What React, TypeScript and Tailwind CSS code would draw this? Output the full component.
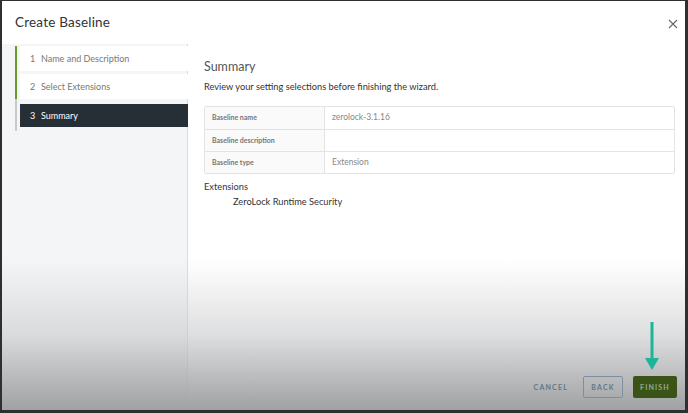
import React from "react";

export default function App() {
  const rows = [
    ["Baseline name", "zerolock-3.1.16"],
    ["Baseline description", ""],
    ["Baseline type", "Extension"],
  ];
  return (
    <div className="w-[688px] h-[413px] bg-[#2e2f31] pl-[2px] pt-[1px] pr-[3px] pb-[3px] overflow-hidden" style={{ fontFamily: "Lato, 'Open Sans', sans-serif" }}>
      <div className="relative w-full h-full bg-white flex flex-col overflow-hidden">
        <div className="h-[43px] flex items-center justify-between pl-[13px] pr-[7px] shrink-0">
          <div className="text-[13.5px] text-[#333] tracking-[0.2px]">Create Baseline</div>
          <svg width="10" height="10" viewBox="0 0 10 10" className="mt-[2px]">
            <path d="M1 1 L9 9 M9 1 L1 9" stroke="#666" strokeWidth="1.1" />
          </svg>
        </div>
        <div className="flex flex-1 min-h-0">
          <div className="w-[186px] bg-[#f4f5f7] border-r border-[#dcdcdc] pl-[13px] pt-[2px] shrink-0">
            <div className="flex flex-col border-l-2 border-[#c9c9c9] w-[173px]">
              <div className="border-l-2 border-[#6b9a2c] -ml-[2px] pl-[3px] flex flex-col gap-[3px]">
                <div className="h-[25px] bg-white flex items-center pl-[10px] text-[9px] text-[#777]">
                  <span className="w-[11px]">1</span>Name and Description
                </div>
                <div className="h-[25px] bg-white flex items-center pl-[10px] text-[9px] text-[#777]">
                  <span className="w-[11px]">2</span>Select Extensions
                </div>
              </div>
              <div className="h-[5px]" />
              <div className="h-[23px] bg-[#262e36] ml-[3px] flex items-center pl-[10px] text-[9px] text-white">
                <span className="w-[11px]">3</span>Summary
              </div>
              <div className="h-[4px]" />
            </div>
          </div>
          <div className="flex-1 pl-[16px] pr-[10px] pt-[14px]">
            <div className="text-[12.5px] text-[#555]">Summary</div>
            <div className="text-[9.25px] text-[#333] mt-[3px]">Review your setting selections before finishing the wizard.</div>
            <div className="mt-[12px] border border-[#e3e3e3] rounded-[2px]">
              {rows.map(([k, v], i) => (
                <div key={k} className={"flex h-[22px] " + (i > 0 ? "border-t border-[#e3e3e3]" : "")}>
                  <div className="w-[120px] bg-[#fafafa] border-r border-[#e3e3e3] flex items-center pl-[7px] text-[7px] font-bold text-[#777]">{k}</div>
                  <div className="flex-1 flex items-center pl-[7px] text-[8.5px] text-[#888]">{v}</div>
                </div>
              ))}
            </div>
            <div className="text-[9.25px] text-[#333] mt-[6px]">Extensions</div>
            <div className="text-[9.25px] text-[#333] mt-[1px] pl-[29px]">ZeroLock Runtime Security</div>
          </div>
        </div>
        <div className="absolute left-0 right-0 bottom-0 h-[150px] bg-gradient-to-b from-[rgba(255,255,255,0)] via-[rgba(200,201,203,0.6)] to-[rgba(160,161,163,1)] pointer-events-none" />
        <div className="absolute right-[8px] bottom-[12px] flex items-center gap-[10px]">
          <div className="px-[5px] text-[7px] font-bold tracking-[1.2px] text-[#5f7788]">CANCEL</div>
          <div className="h-[22px] w-[40px] border border-[#7c8fa0] rounded-[2px] flex items-center justify-center text-[7px] font-bold tracking-[1.2px] text-[#5f7788]">BACK</div>
          <div className="h-[22px] w-[44px] bg-[#3a5418] rounded-[2px] flex items-center justify-center text-[7px] font-bold tracking-[1.2px] text-[#9aa88a]">FINISH</div>
        </div>
        <svg className="absolute left-[643px] top-[321px]" width="14" height="50" viewBox="0 0 14 50">
          <path d="M7 0 V38" stroke="#1db597" strokeWidth="3" />
          <path d="M0 36 H14 L7 48 Z" fill="#1db597" />
        </svg>
      </div>
    </div>
  );
}
